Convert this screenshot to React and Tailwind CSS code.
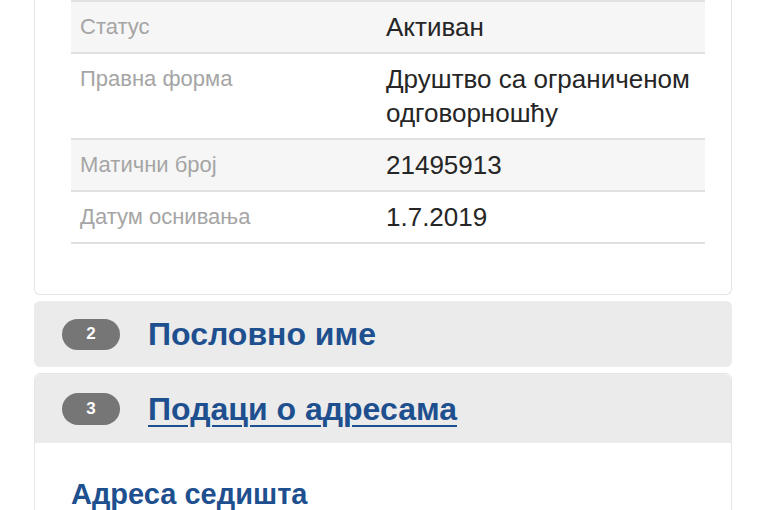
export default function App() {
  const rows = [
    { label: 'Статус', value: ['Активан'], shaded: true },
    { label: 'Правна форма', value: ['Друштво са ограниченом', 'одговорношћу'], shaded: false },
    { label: 'Матични број', value: ['21495913'], shaded: true },
    { label: 'Датум оснивања', value: ['1.7.2019'], shaded: false },
  ]

  return (
    <div className="h-screen overflow-hidden bg-white px-[34px] font-['Liberation_Sans',Arial,sans-serif]">
      <div className="w-[698px] rounded-b-md border border-t-0 border-[#e3e3e3] pb-[50px] pl-[36px] pr-[26px]">
        <div className="border-t-2 border-[#e2e2e2]">
          {rows.map((r) => (
            <div
              key={r.label}
              className={`flex border-b-2 border-[#e0e0e0] ${r.shaded ? 'bg-[#f6f6f6]' : 'bg-white'}`}
            >
              <div className="w-[315px] shrink-0 pl-[9px] pt-[12px] text-[22px] leading-[26px] text-[#a5a5a5]">
                {r.label}
              </div>
              <div className="py-[8px] text-[26px] leading-[34px] text-[#262626]">
                {r.value.map((v) => (
                  <div key={v}>{v}</div>
                ))}
              </div>
            </div>
          ))}
        </div>
      </div>

      <div className="mt-[6px] flex h-[66px] w-[698px] items-center gap-[28px] rounded-md bg-[#ebebeb] pl-[28px]">
        <span className="flex h-[31px] w-[58px] items-center justify-center rounded-full bg-[#767676] text-[17px] font-bold text-white">
          2
        </span>
        <span className="text-[32px] font-bold text-[#1e4f8e]">Пословно име</span>
      </div>

      <div className="mt-[6px] w-[698px] rounded-t-md border border-[#e6e6e6]">
        <div className="flex h-[69px] items-center gap-[28px] rounded-t-md bg-[#ebebeb] pl-[27px]">
          <span className="flex h-[32px] w-[58px] items-center justify-center rounded-full bg-[#767676] text-[17px] font-bold text-white">
            3
          </span>
          <span className="text-[32px] font-bold text-[#1e4f8e] underline decoration-2 underline-offset-[5px]">
            Подаци о адресама
          </span>
        </div>
        <div className="h-[120px] pl-[36px] pt-[34px]">
          <div className="text-[29px] font-bold leading-[34px] text-[#1e4f8e]">Адреса седишта</div>
        </div>
      </div>
    </div>
  )
}
